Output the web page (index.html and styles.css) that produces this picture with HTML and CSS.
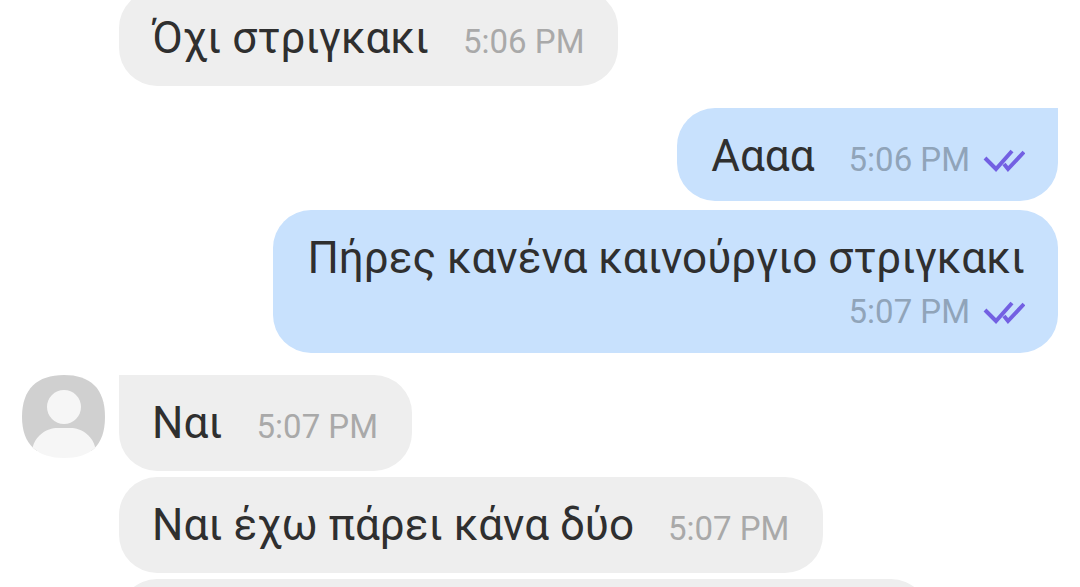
FILE: index.html
```html
<!DOCTYPE html>
<html lang="el">
<head>
<meta charset="utf-8">
<title>Chat</title>
<link rel="stylesheet" href="styles.css">
</head>
<body>
<main class="chat">
  <div class="row incoming"><div class="bubble"><span class="text">Όχι στριγκακι</span><time class="time">5:06 PM</time></div></div>
  <div class="row outgoing turn"><div class="bubble lead"><span class="text">Αααα</span><span class="meta"><time class="time">5:06 PM</time><svg class="ticks" viewBox="0 0 42 26" aria-label="Seen"><path d="M2 11 13 22 29 4M21 17 25 22 41 5"/></svg></span></div></div>
  <div class="row outgoing"><div class="bubble stacked"><span class="text">Πήρες κανένα καινούργιο στριγκακι</span><span class="meta"><time class="time">5:07 PM</time><svg class="ticks" viewBox="0 0 42 26" aria-label="Seen"><path d="M2 11 13 22 29 4M21 17 25 22 41 5"/></svg></span></div></div>
  <div class="row incoming turn"><svg class="avatar" viewBox="0 0 84 84" aria-label="Contact"><defs><clipPath id="face"><path d="M42 0C68 0 83 13 83 42S68 83 42 83 0 70 0 42 15 0 42 0Z"/></clipPath></defs><g clip-path="url(#face)"><path fill="#d0d0d0" d="M0 0H84V76H0Z"/><circle cx="42" cy="32" r="17" fill="#f6f6f6"/><path fill="#f6f6f6" d="M5 84 10 76C12 61 24 53 36 53H48C60 53 72 61 74 76L79 84Z"/></g></svg><div class="bubble lead"><span class="text">Ναι</span><time class="time">5:07 PM</time></div></div>
  <div class="row incoming"><div class="bubble"><span class="text">Ναι έχω πάρει κάνα δύο</span><time class="time">5:07 PM</time></div></div>
  <div class="row incoming"><div class="bubble next"></div></div>
</main>
</body>
</html>
```
FILE: styles.css
```css
* { box-sizing: border-box; }
body { margin: 0; height: 100vh; background: #fff; font-family: Roboto, "Noto Sans", sans-serif; overflow: hidden; }
.chat { display: flex; flex-direction: column; gap: 6px; height: calc(100vh + 10px); padding: 0 22px; margin-top: -10px; overflow: hidden; }
.row { display: flex; flex: none; }
.incoming { padding-left: 97px; }
.outgoing { justify-content: flex-end; margin-top: 3px; }
.turn { margin-top: 16px; }
.bubble { display: flex; align-items: baseline; gap: 34px; padding: 22px 34px 22px 33px; border-radius: 38px; background: #eee; }
.outgoing .bubble { background: #c8e1fd; padding: 22px 33px 19px 34px; }
.incoming .lead { border-top-left-radius: 0; }
.outgoing .lead { border-top-right-radius: 0; }
.outgoing .stacked { flex-direction: column; align-items: flex-end; gap: 6px; }
.text { font-size: 44px; line-height: 52px; color: #2f2f2f; white-space: nowrap; }
.time { font-size: 33px; line-height: 44px; color: #a9a9a9; white-space: nowrap; }
.outgoing .time { color: #90a4b9; }
.meta { display: flex; align-items: center; gap: 13px; }
.ticks { width: 42px; height: 26px; fill: none; stroke: #7360e2; stroke-width: 4; }
.avatar { width: 84px; height: 84px; flex: none; margin-left: -97px; margin-right: 13px; }
.next { width: 100%; max-width: 810px; height: 96px; }
```
